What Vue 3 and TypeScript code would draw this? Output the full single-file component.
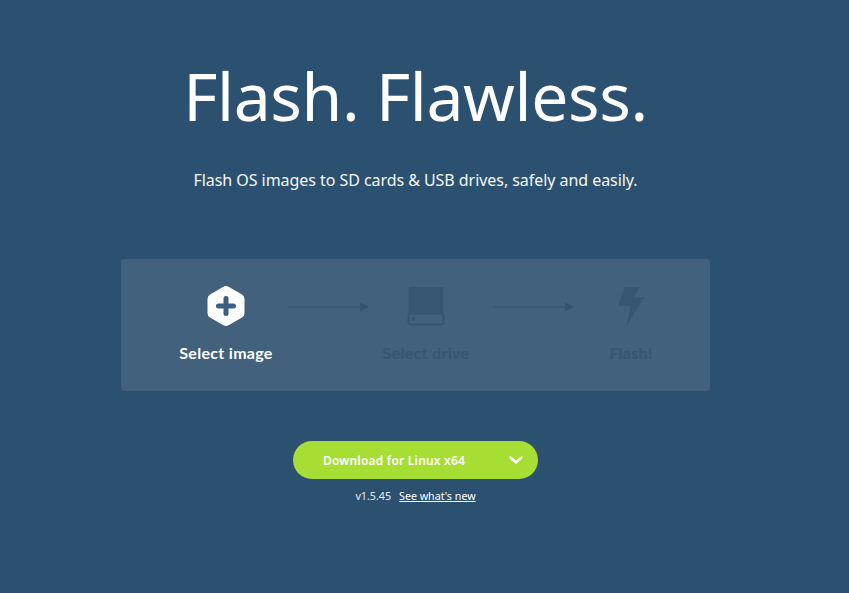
<template>
  <main class="page">
    <h1 class="title">Flash. Flawless.</h1>
    <p class="subtitle">Flash OS images to SD cards &amp; USB drives, safely and easily.</p>

    <section class="panel">
      <div class="step step-image">
        <svg class="step-icon" width="40" height="40" viewBox="0 0 40 40">
          <path d="M20 0 Q21.400 0 22.600 .7 L36 8.500 Q38.500 10 38.500 13 V27 Q38.500 30 36 31.500 L22.600 39.300 Q20 40.700 17.400 39.300 L4 31.500 Q1.500 30 1.500 27 V13 Q1.500 10 4 8.500 L17.400 .7 Q18.600 0 20 0 Z" fill="#fff" />
          <path d="M20 12.500 V27.500 M12.500 20 H27.500" stroke="#3a5f80" stroke-width="5" stroke-linecap="round" fill="none" />
        </svg>
        <span class="step-label">Select image</span>
      </div>

      <svg class="arrow" width="82" height="10" viewBox="0 0 82 10">
        <path d="M0 5 H73" stroke="#325470" stroke-width="1" fill="none" />
        <path d="M72 .5 L81 5 L72 9.500 Z" fill="#325470" />
      </svg>

      <div class="step step-drive">
        <svg class="step-icon" width="40" height="40" viewBox="0 0 40 40">
          <path d="M5 1 H36 Q37.500 1 37.500 3 V28 H2.500 V3 Q2.500 1 5 1 Z" fill="#365672" />
          <rect x="2.600" y="27.500" width="35" height="11" rx="2.500" fill="none" stroke="#365672" stroke-width="2" />
          <circle cx="7.500" cy="33" r="1.800" fill="#365672" />
        </svg>
        <span class="step-label">Select drive</span>
      </div>

      <svg class="arrow arrow-last" width="82" height="10" viewBox="0 0 82 10">
        <path d="M0 5 H73" stroke="#325470" stroke-width="1" fill="none" />
        <path d="M72 .5 L81 5 L72 9.500 Z" fill="#325470" />
      </svg>

      <div class="step step-flash">
        <svg class="step-icon" width="40" height="40" viewBox="0 0 40 40">
          <path d="M13.300 1 H28.300 L23.300 11.300 H33.300 L15.700 40 L19.700 19.700 H7.300 Z" fill="#365672" />
        </svg>
        <span class="step-label">Flash!</span>
      </div>
    </section>

    <button class="download" type="button">
      <span class="download-text">Download for Linux x64</span>
      <svg class="chevron" width="14" height="8" viewBox="0 0 14 8">
        <path d="M1.500 1.500 L7 6.500 L12.500 1.500" stroke="#fff" stroke-width="2.400" stroke-linecap="round" stroke-linejoin="round" fill="none" />
      </svg>
    </button>

    <p class="version">
      <span>{{ version }}</span>
      <a class="whats-new" href="#">See what's new</a>
    </p>
  </main>
</template>

<script setup lang="ts">
const version = 'v1.5.45';
</script>

<style>
html,
body {
  margin: 0;
  background: #2c5170;
}
</style>

<style scoped>
.page {
  height: 593px;
  box-sizing: border-box;
  padding: 50px 18px 0 0;
  display: flex;
  flex-direction: column;
  align-items: center;
  background: #2c5170;
  color: #fff;
  font-family: "Noto Sans", "Open Sans", sans-serif;
  overflow: hidden;
}

.title {
  margin: 0;
  font-size: 66px;
  line-height: 90px;
  font-weight: 400;
  letter-spacing: -0.4px;
}

.subtitle {
  margin: 26px 0 0;
  font-size: 16px;
  line-height: 28px;
  letter-spacing: -0.05px;
  color: #f4f7f9;
}

.panel {
  width: 589px;
  height: 132px;
  margin-top: 65px;
  box-sizing: border-box;
  padding: 27px 0 0 43px;
  display: flex;
  align-items: flex-start;
  background: #41617d;
  border-radius: 4px;
}

.step {
  display: flex;
  flex: none;
  flex-direction: column;
  align-items: center;
  gap: 17px;
}

.step-image {
  width: 124px;
}

.step-drive {
  width: 112px;
  margin-right: 10px;
}

.step-flash {
  width: 112px;
}

.step-icon {
  display: block;
}

.step-label {
  font-family: "Lato", "Noto Sans", sans-serif;
  font-size: 16px;
  line-height: 20px;
  font-weight: 700;
  letter-spacing: 0.3px;
  color: #365672;
  white-space: nowrap;
}

.step-image .step-label {
  color: #fff;
}

.arrow {
  margin-top: 16px;
  flex: none;
}

.arrow-last {
  margin-left: 1px;
}

.download {
  width: 245px;
  height: 38px;
  margin-top: 50px;
  padding: 0 15px 0 30px;
  display: flex;
  align-items: center;
  justify-content: space-between;
  border: none;
  border-radius: 19px;
  background: #a6de34;
  color: #fff;
  font-family: inherit;
  cursor: pointer;
}

.download-text {
  font-size: 12px;
  font-weight: 600;
  letter-spacing: 0.2px;
  white-space: nowrap;
}

.chevron {
  display: block;
}

.version {
  margin: 8px 0 0;
  display: flex;
  gap: 8px;
  font-size: 10.700px;
  line-height: 18px;
  color: #e6edf2;
}

.whats-new {
  color: #fff;
  text-decoration: underline;
}
</style>
